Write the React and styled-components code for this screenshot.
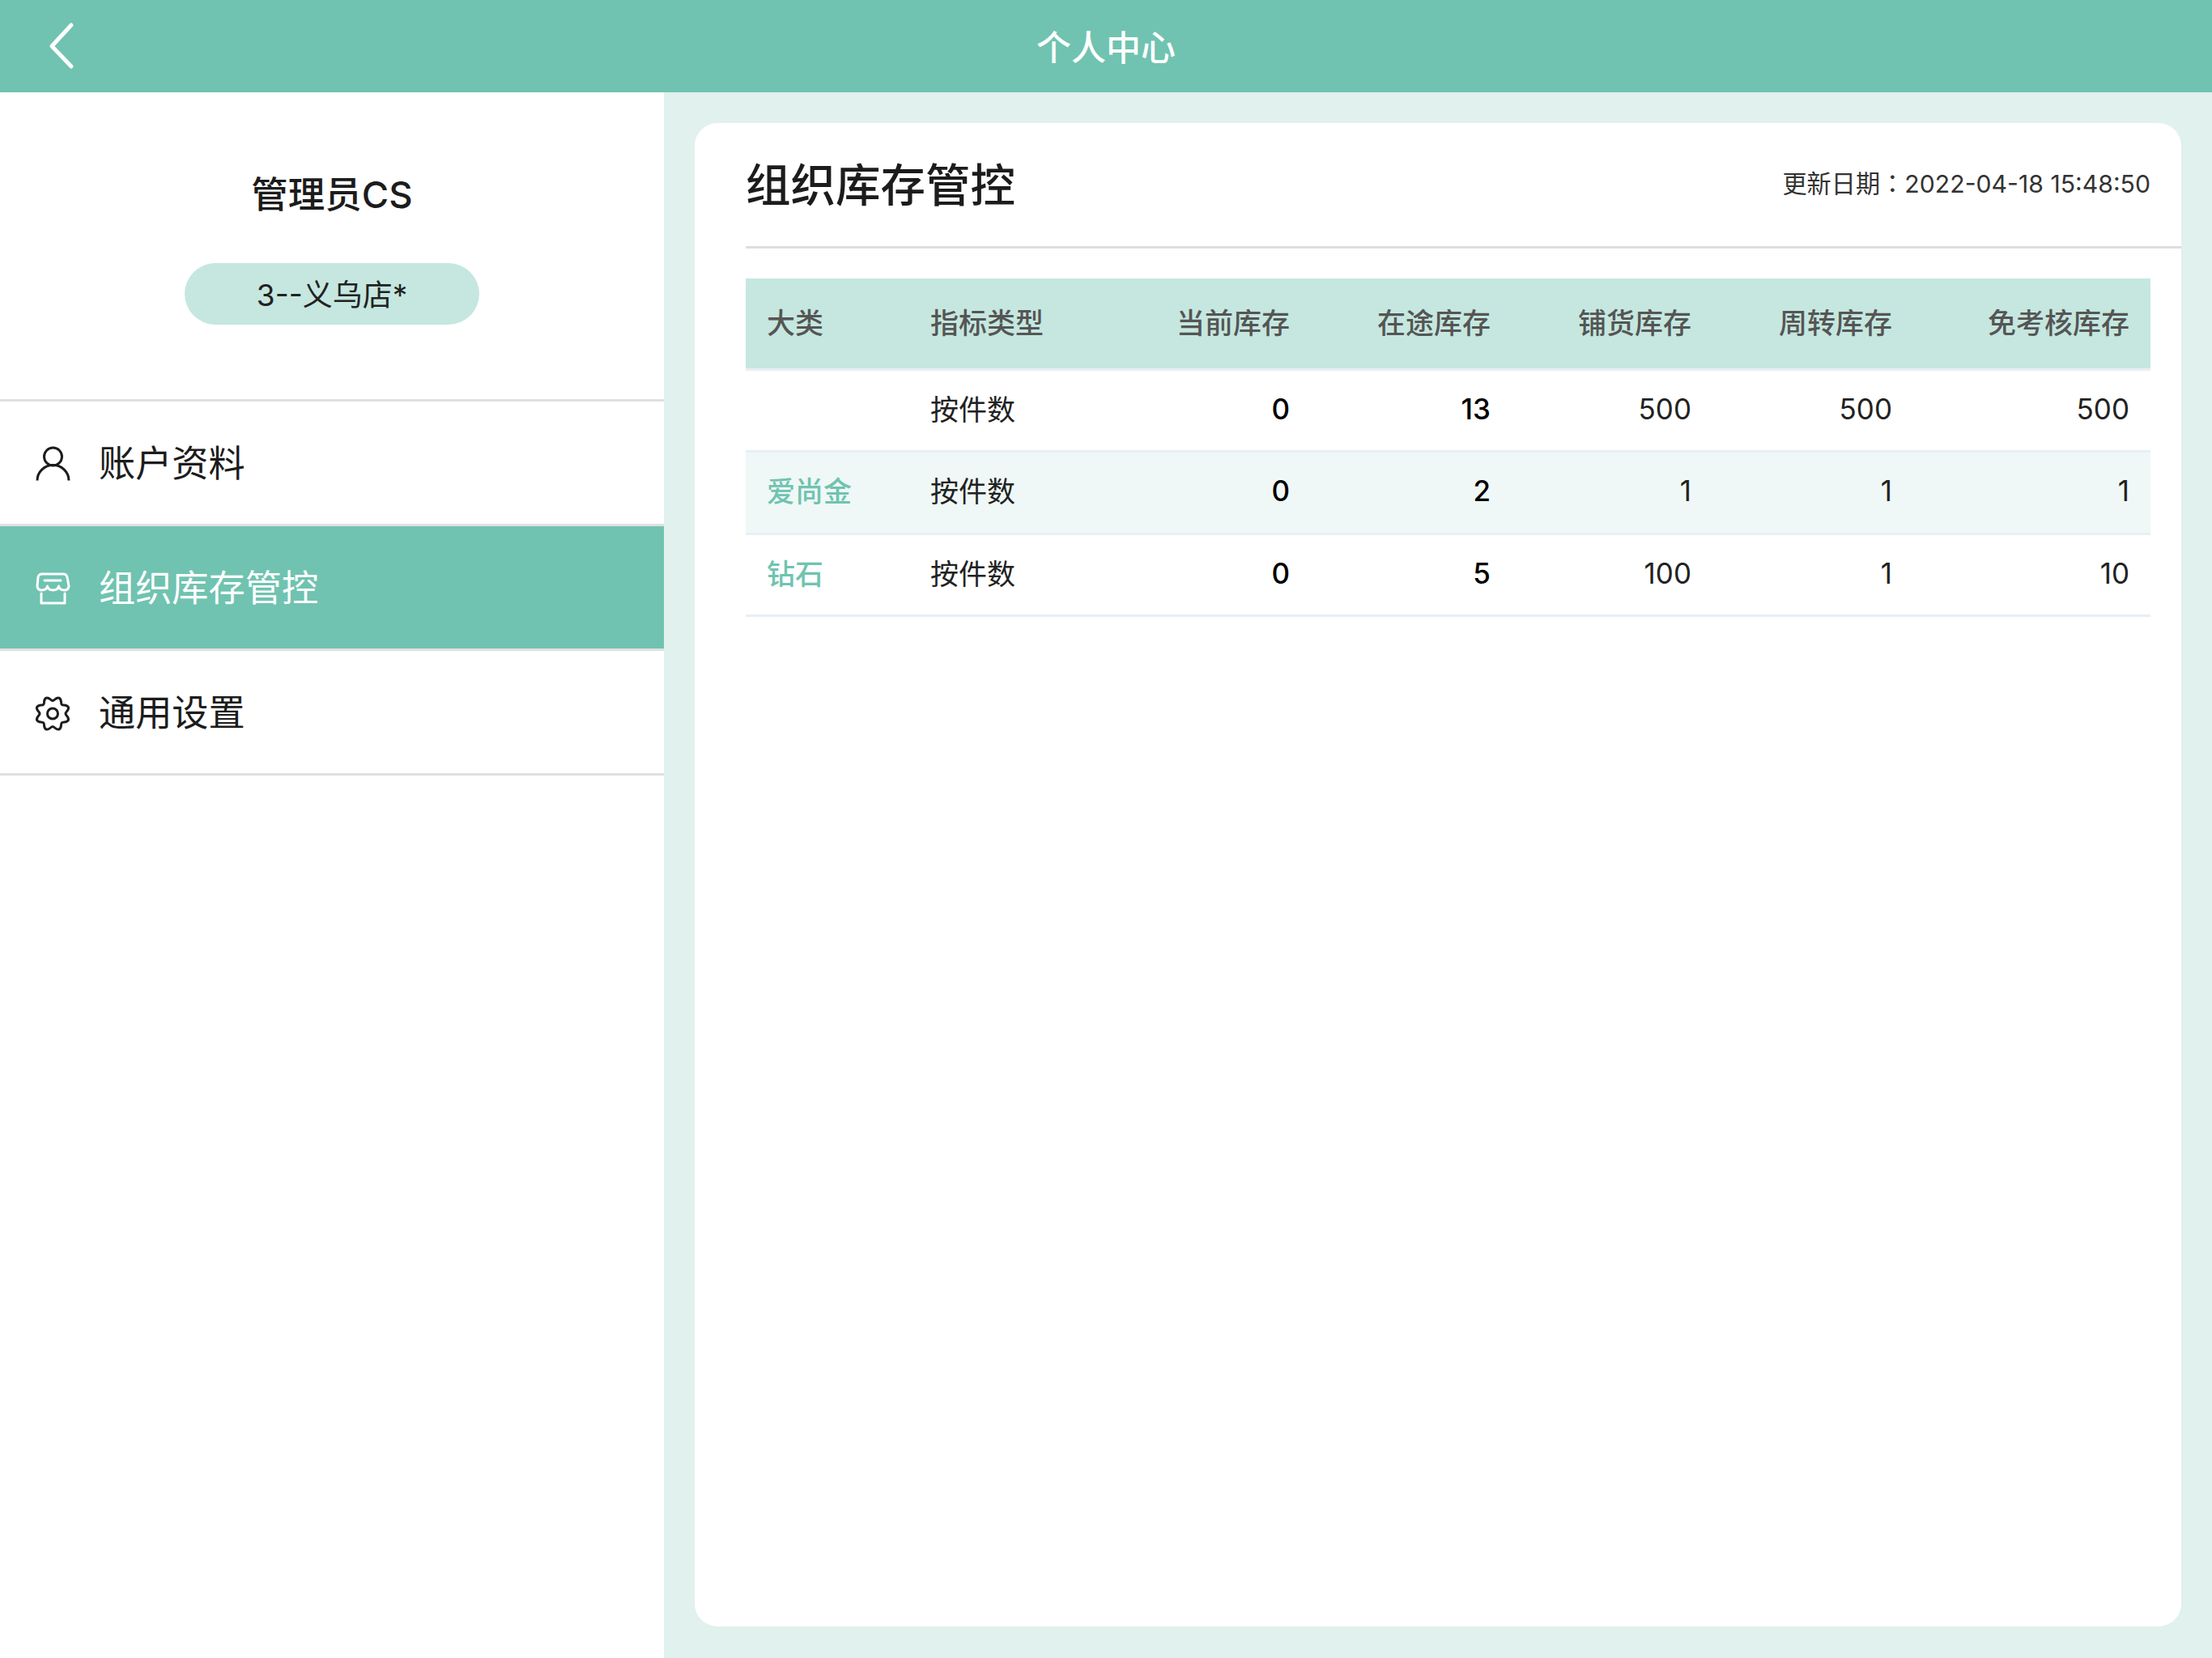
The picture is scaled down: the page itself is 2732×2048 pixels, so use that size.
import React from "react";
import styled, { createGlobalStyle } from "styled-components";

const GlobalStyle = createGlobalStyle`
	* {
		box-sizing: border-box;
	}
	html,
	body {
		margin: 0;
		padding: 0;
		background-color: #e1f1ed;
		font-family: Inter, "Noto Sans CJK SC", sans-serif;
	}
`;

const Page = styled.div`
	width: 2732px;
	height: 2048px;
	display: flex;
	flex-direction: column;
	overflow: hidden;
`;

const TopBar = styled.header`
	height: 114px;
	flex-shrink: 0;
	display: grid;
	grid-template-columns: 1fr auto 1fr;
	align-items: center;
	background-color: #70c3b0;
	color: #fff;
`;

const BackButton = styled.button`
	width: 40px;
	height: 60px;
	margin-left: 56px;
	padding: 0;
	border: 0;
	background: none;
	display: flex;
	svg {
		display: block;
	}
`;

const TopTitle = styled.h1`
	margin: 0;
	padding-bottom: 3px;
	font-size: 43px;
	font-weight: 500;
`;

const Body = styled.div`
	flex: 1;
	display: flex;
	min-height: 0;
`;

// Sidebar

const Side = styled.aside`
	width: 820px;
	flex-shrink: 0;
	background-color: #fff;
`;

const Profile = styled.div`
	height: 382px;
	padding-top: 97px;
	display: flex;
	flex-direction: column;
	align-items: center;
	border-bottom: 3px solid #e0e0e0;
`;

const ProfileName = styled.div`
	height: 60px;
	line-height: 60px;
	font-size: 45.5px;
	font-weight: 500;
	color: #1c1c1c;
`;

const StorePill = styled.div`
	width: 364px;
	height: 76px;
	margin-top: 54px;
	padding-bottom: 3px;
	border-radius: 38px;
	display: flex;
	align-items: center;
	justify-content: center;
	background-color: #c5e7df;
	font-size: 37px;
	color: #222;
`;

const Menu = styled.ul`
	margin: 0;
	padding: 0;
	list-style: none;
`;

const MenuItem = styled.li`
	height: 154px;
	padding-left: 30px;
	display: flex;
	align-items: center;
	gap: 22px;
	border-bottom: 3px solid #e0e0e0;
	font-size: 45.2px;
	color: ${(props) => (props.$active ? "#fff" : "#1c1c1c")};
	background-color: ${(props) => (props.$active ? "#70c3b0" : "transparent")};
	svg {
		display: block;
		flex-shrink: 0;
	}
`;

const MenuLabel = styled.span`
	margin-bottom: 4px;
`;

// Main

const Main = styled.main`
	flex: 1;
	min-width: 0;
	padding: 38px 38px 39px;
`;

const Card = styled.section`
	height: 100%;
	padding-left: 63px;
	border-radius: 28px;
	background-color: #fff;
`;

const CardHeader = styled.div`
	height: 155px;
	padding: 0 38px 6px 0;
	display: flex;
	align-items: center;
	justify-content: space-between;
	border-bottom: 3px solid #dedede;
`;

const CardTitle = styled.h2`
	margin: 0;
	font-size: 55.5px;
	font-weight: 500;
	color: #1c1c1c;
`;

const UpdateTime = styled.div`
	font-family: Inter, "Noto Sans CJK TC", sans-serif;
	font-size: 30.2px;
	color: #333;
`;

const Table = styled.table`
	width: 1735px;
	margin-top: 37px;
	table-layout: fixed;
	border-collapse: separate;
	border-spacing: 0;
`;

const Th = styled.th`
	height: 114px;
	padding: 0 26px 6px;
	background-color: #c5e7df;
	border-bottom: 3px solid #e9eef5;
	font-size: 35px;
	font-weight: 500;
	color: #555;
	text-align: ${(props) => props.$align || "right"};
`;

const Row = styled.tr`
	background-color: ${(props) => (props.$striped ? "#eff8f6" : "#fff")};
`;

const Td = styled.td`
	height: 101.3px;
	padding: 0 26px 4px;
	border-bottom: 3px solid #e9eef5;
	font-size: 35px;
	font-weight: ${(props) => (props.$strong ? 500 : 400)};
	color: ${(props) => (props.$strong ? "#000" : "#222")};
	text-align: right;
`;

const TypeCell = styled(Td)`
	padding-bottom: 7px;
	text-align: left;
`;

const Category = styled(TypeCell)`
	font-weight: 500;
	color: #70c3b0;
`;

const UserIcon = () => (
	<svg width="70" height="70" viewBox="0 0 70 70" fill="none" stroke="currentColor" strokeWidth="3">
		<circle cx="35.5" cy="27" r="11" />
		<path d="M16 56.5 a19.5 19 0 0 1 39 0" />
	</svg>
);

const StoreIcon = () => (
	<svg width="70" height="70" viewBox="0 0 70 70" fill="none" stroke="currentColor" strokeWidth="3" strokeLinejoin="round" strokeLinecap="round">
		<path d="M22 18 H48 Q52 18 53 22 L55 33 q-.5 5 -5.5 5 q-6 0 -7 -5 q-1 5 -7 5 q-6 0 -7 -5 q-1 5 -7 5 q-5 0 -5.5 -5 L17 22 Q18 18 22 18 Z" />
		<path d="M25 26 H45" />
		<path d="M21 42 V54 H50 V42" />
	</svg>
);

// eight rounded teeth, one every 45deg starting at 22.5deg from the top
const gearPoint = (r, deg) => {
	const rad = (deg * Math.PI) / 180;
	return `${(35 + r * Math.sin(rad)).toFixed(2)} ${(36.5 - r * Math.cos(rad)).toFixed(2)}`;
};

const gearPath = () => {
	const low = 16;
	const high = 21;
	let d = `M${gearPoint(low, 0)}`;
	for (let i = 0; i < 8; i++) {
		const a = 22.5 + i * 45;
		d += ` C${gearPoint(low, a - 14)} ${gearPoint(high, a - 12)} ${gearPoint(high, a)}`;
		d += ` C${gearPoint(high, a + 12)} ${gearPoint(low, a + 14)} ${gearPoint(low, a + 22.5)}`;
	}
	return d + " Z";
};

const GearIcon = () => (
	<svg width="70" height="70" viewBox="0 0 70 70" fill="none" stroke="currentColor" strokeWidth="3">
		<path d={gearPath()} />
		<circle cx="35" cy="36.5" r="6.5" />
	</svg>
);

const columns = ["当前库存", "在途库存", "铺货库存", "周转库存", "免考核库存"];

const rows = [
	{ name: "", type: "按件数", values: [0, 13, 500, 500, 500] },
	{ name: "爱尚金", type: "按件数", values: [0, 2, 1, 1, 1] },
	{ name: "钻石", type: "按件数", values: [0, 5, 100, 1, 10] },
];

const App = () => {
	return (
		<>
			<GlobalStyle />
			<Page>
				<TopBar>
					<BackButton>
						<svg width="40" height="60" viewBox="0 0 40 60" fill="none" stroke="#fff" strokeWidth="5" strokeLinecap="round" strokeLinejoin="round">
							<path d="M32 4 L8 30 L32 55" />
						</svg>
					</BackButton>
					<TopTitle>个人中心</TopTitle>
				</TopBar>
				<Body>
					<Side>
						<Profile>
							<ProfileName>管理员CS</ProfileName>
							<StorePill>3--义乌店*</StorePill>
						</Profile>
						<Menu>
							<MenuItem>
								<UserIcon />
								<MenuLabel>账户资料</MenuLabel>
							</MenuItem>
							<MenuItem $active>
								<StoreIcon />
								<MenuLabel>组织库存管控</MenuLabel>
							</MenuItem>
							<MenuItem>
								<GearIcon />
								<MenuLabel>通用设置</MenuLabel>
							</MenuItem>
						</Menu>
					</Side>
					<Main>
						<Card>
							<CardHeader>
								<CardTitle>组织库存管控</CardTitle>
								<UpdateTime>更新日期：2022-04-18 15:48:50</UpdateTime>
							</CardHeader>
							<Table>
								<colgroup>
									<col style={{ width: 202 }} />
									<col style={{ width: 248 }} />
									<col style={{ width: 248 }} />
									<col style={{ width: 248 }} />
									<col style={{ width: 248 }} />
									<col style={{ width: 248 }} />
									<col />
								</colgroup>
								<thead>
									<tr>
										<Th $align="left">大类</Th>
										<Th $align="left">指标类型</Th>
										{columns.map((c) => (
											<Th key={c}>{c}</Th>
										))}
									</tr>
								</thead>
								<tbody>
									{rows.map((r, i) => (
										<Row key={r.type + i} $striped={i === 1}>
											<Category>{r.name}</Category>
											<TypeCell>{r.type}</TypeCell>
											{r.values.map((v, j) => (
												<Td key={j} $strong={j < 2}>
													{v}
												</Td>
											))}
										</Row>
									))}
								</tbody>
							</Table>
						</Card>
					</Main>
				</Body>
			</Page>
		</>
	);
};

export default App;
